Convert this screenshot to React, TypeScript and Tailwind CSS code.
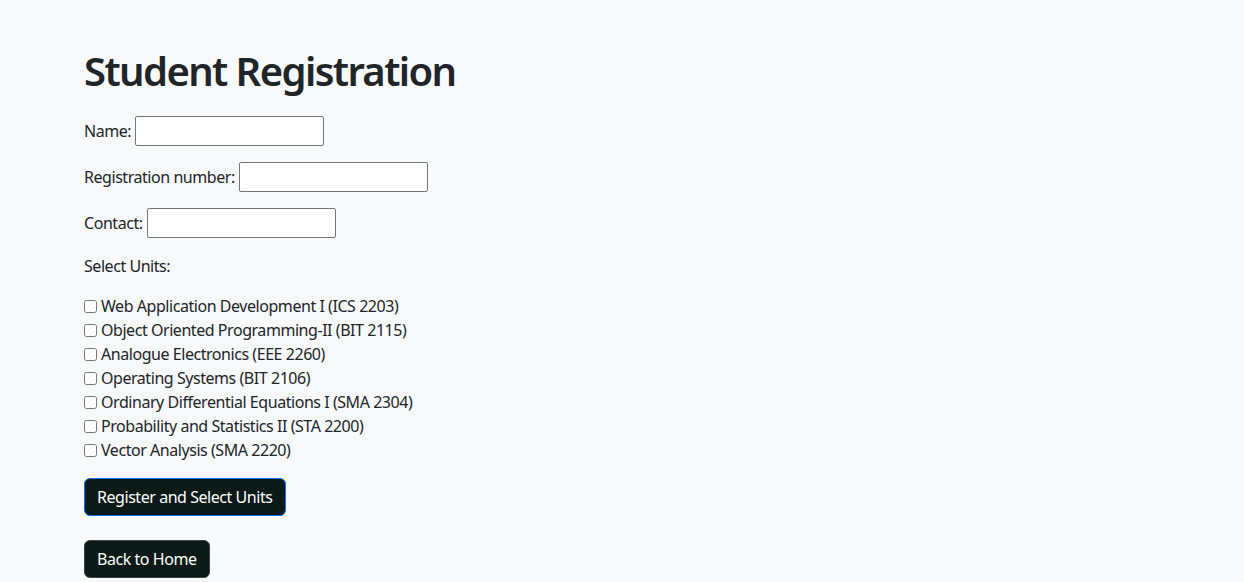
import React from "react";

const units = [
  "Web Application Development I (ICS 2203)",
  "Object Oriented Programming-II (BIT 2115)",
  "Analogue Electronics (EEE 2260)",
  "Operating Systems (BIT 2106)",
  "Ordinary Differential Equations I (SMA 2304)",
  "Probability and Statistics II (STA 2200)",
  "Vector Analysis (SMA 2220)",
];

function Field({ label }: { label: string }) {
  return (
    <div className="mb-4 flex items-baseline">
      <label className="mr-1">{label}</label>
      <input
        type="text"
        className="h-[30px] w-[189px] rounded-[2px] border border-[#767676] bg-white px-[2px]"
      />
    </div>
  );
}

export default function App() {
  return (
    <div
      className="min-h-[582px] bg-[#f8f9fa] pl-[84px] pt-[47px] text-[16px] leading-[24px] tracking-[-0.45px] text-[#212529]"
      style={{ fontFamily: '"Noto Sans", sans-serif' }}
    >
      <h1 className="mb-[21px] text-[40px] font-semibold leading-[48px] tracking-[-1.6px]">Student Registration</h1>
      <Field label="Name:" />
      <Field label="Registration number:" />
      <Field label="Contact:" />
      <div className="mb-4">Select Units:</div>
      <div className="mb-4">
        {units.map((u) => (
          <div key={u} className="flex items-center">
            <input type="checkbox" className="m-0 mr-[4px] h-[13px] w-[13px]" />
            <span>{u}</span>
          </div>
        ))}
      </div>
      <button className="mb-6 block h-[38px] rounded-[6px] border border-[#0d6efd] bg-[#0b1a17] px-3 text-white">
        Register and Select Units
      </button>
      <button className="block h-[38px] rounded-[6px] border border-[#3a4441] bg-[#0b1a17] px-3 text-white">
        Back to Home
      </button>
    </div>
  );
}
